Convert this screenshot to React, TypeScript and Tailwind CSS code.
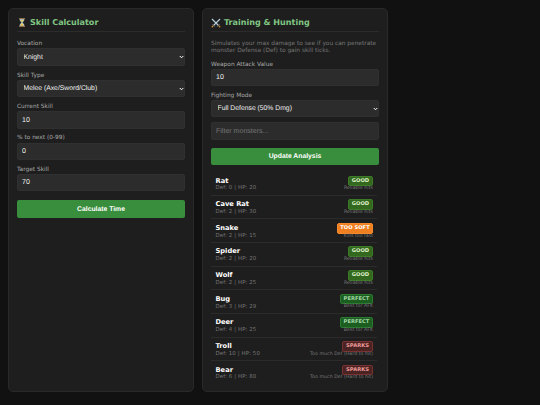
import type { ReactNode } from "react";

const SANS = "font-['DejaVu_Sans',sans-serif] [text-rendering:geometricPrecision]";
const FIELD =
  "block h-[17.3px] w-full appearance-none rounded-[2px] border border-[#303030] bg-[#2c2c2c] font-['Liberation_Sans',sans-serif] leading-[15px] text-[#f0f0f0] outline-none placeholder:text-[#757575] [text-rendering:geometricPrecision]";

type Rating = "good" | "soft" | "perfect" | "sparks";

const RATINGS: Record<Rating, { label: string; note: string; style: string }> = {
  good: { label: "GOOD", note: "Reliable hits", style: "w-[25px] border-[#3d7a28] bg-[#33691e] text-[#dcedc8]" },
  soft: { label: "TOO SOFT", note: "Kills too fast", style: "w-[36px] border-[#f58a2c] bg-[#ef7f1f] text-white" },
  perfect: { label: "PERFECT", note: "Best for AFK", style: "w-[33px] border-[#2a7a30] bg-[#1b5e20] text-[#a5d6a7]" },
  sparks: { label: "SPARKS", note: "Too much Def (Hard to hit)", style: "w-[31px] border-[#7a3030] bg-[#4a2423] text-[#ef9a9a]" },
};

const MONSTERS: { name: string; def: number; hp: number; rating: Rating }[] = [
  { name: "Rat", def: 0, hp: 20, rating: "good" },
  { name: "Cave Rat", def: 2, hp: 30, rating: "good" },
  { name: "Snake", def: 2, hp: 15, rating: "soft" },
  { name: "Spider", def: 2, hp: 20, rating: "good" },
  { name: "Wolf", def: 2, hp: 25, rating: "good" },
  { name: "Bug", def: 3, hp: 29, rating: "perfect" },
  { name: "Deer", def: 4, hp: 25, rating: "perfect" },
  { name: "Troll", def: 10, hp: 50, rating: "sparks" },
  { name: "Bear", def: 6, hp: 80, rating: "sparks" },
];

function Hourglass() {
  return (
    <svg className="h-[9px] w-[10px] shrink-0" viewBox="0 0 20 18">
      <path d="M5.5 2h9v2.5c0 2-3.2 3-3.2 4.5s3.2 2.5 3.2 4.5V16h-9v-2.5c0-2 3.2-3 3.2-4.5S5.5 6.5 5.5 4.5Z" fill="#a9c4cb" />
      <path d="M7 4.5h6L10 8.5ZM10 10l3.5 5h-7Z" fill="#f5c542" />
      <path d="M4 .5h12v2H4ZM4 15.5h12v2H4Z" fill="#b58a56" />
    </svg>
  );
}

function Swords() {
  return (
    <svg className="h-[10px] w-[10px] shrink-0" viewBox="0 0 20 20">
      <path d="M2 2l12.5 12.5M18 2L5.5 14.5" stroke="#b9d3df" strokeWidth="2.2" />
      <path d="M3 12.5l4.5 4.5M17 12.5L12.5 17" stroke="#7b8d96" strokeWidth="1.6" />
      <path d="M5 15l-3.5 3.5M15 15l3.5 3.5" stroke="#c98a35" strokeWidth="2.2" />
    </svg>
  );
}

function Panel({ icon, title, children }: { icon: ReactNode; title: string; children: ReactNode }) {
  return (
    <section className="h-[384px] w-[186px] rounded-[5px] border border-[#292929] bg-[#1e1e1e] px-2 pt-[7px]">
      <h2 className="flex h-4 items-start gap-[3px] border-b border-[#2c2c2c] text-[8.05px] leading-[13px] font-bold whitespace-nowrap text-[#81c784]">
        <span className="flex h-[13px] items-center">{icon}</span>
        {title}
      </h2>
      {children}
    </section>
  );
}

function Label({ text, children }: { text: string; children: ReactNode }) {
  return (
    <label className="block h-[31.4px]">
      <span className="block h-[9.2px] text-[5.85px] leading-[10px] whitespace-nowrap text-[#aaa]">{text}</span>
      {children}
    </label>
  );
}

function Select({ value }: { value: string }) {
  return (
    <span className="grid items-center">
      <select className={`${FIELD} col-start-1 row-start-1 pl-[5.5px] text-[6.8px]`} defaultValue={value}>
        <option>{value}</option>
      </select>
      <svg className="col-start-1 row-start-1 mr-[1px] h-[4px] w-[5px] justify-self-end" viewBox="0 0 10 8">
        <path d="M1.5 2L5 5.5 8.5 2" fill="none" stroke="#fff" strokeWidth="2" />
      </svg>
    </span>
  );
}

function TextInput({ value, placeholder }: { value?: string; placeholder?: string }) {
  return <input className={`${FIELD} pt-[0.6px] pl-[4px] text-[7.05px]`} defaultValue={value} placeholder={placeholder} />;
}

function Button({ children }: { children: ReactNode }) {
  return (
    <button className="block h-[17.6px] w-full rounded-[2px] bg-[#388e3c] font-['Liberation_Sans',sans-serif] text-[6.8px] leading-[17px] font-bold text-white [text-rendering:geometricPrecision]">
      {children}
    </button>
  );
}

export default function App() {
  return (
    <main className={`flex h-[405px] w-[540px] gap-2 overflow-hidden bg-[#111] p-2 ${SANS}`}>
      <Panel icon={<Hourglass />} title="Skill Calculator">
        <div className="pt-[7.3px]">
          <Label text="Vocation"><Select value="Knight" /></Label>
          <Label text="Skill Type"><Select value="Melee (Axe/Sword/Club)" /></Label>
          <Label text="Current Skill"><TextInput value="10" /></Label>
          <Label text="% to next (0-99)"><TextInput value="0" /></Label>
          <Label text="Target Skill"><TextInput value="70" /></Label>
        </div>
        <div className="pt-[4px]"><Button>Calculate Time</Button></div>
      </Panel>

      <Panel icon={<Swords />} title="Training & Hunting">
        <p className="h-[27.5px] pt-[8.5px] text-[5.85px] leading-[7px] whitespace-nowrap text-[#777]">
          Simulates your max damage to see if you can penetrate
          <br />
          monster Defense (Def) to gain skill ticks.
        </p>
        <Label text="Weapon Attack Value"><TextInput value="10" /></Label>
        <Label text="Fighting Mode"><Select value="Full Defense (50% Dmg)" /></Label>
        <TextInput placeholder="Filter monsters..." />
        <div className="pt-[8px]"><Button>Update Analysis</Button></div>
        <ul className="mt-[7px] w-[166px]">
          {MONSTERS.map(({ name, def, hp, rating }) => {
            const r = RATINGS[rating];
            return (
              <li key={name} className="flex h-[23.65px] justify-between border-b border-[#2b2b2b] pt-[3.4px] pr-1 pl-[4.5px] last:border-transparent">
                <div className="pt-[1px] whitespace-nowrap">
                  <div className="text-[6.7px] leading-[8.5px] font-bold text-white">{name}</div>
                  <div className="pt-[0.3px] text-[5.4px] leading-[6px] tracking-[0.12px] text-[#777]">Def: {def} | HP: {hp}</div>
                </div>
                <div className="flex flex-col items-end whitespace-nowrap">
                  <span className={`h-[10.7px] rounded-[2px] border text-center text-[5.2px] leading-[9.4px] font-bold ${r.style}`}>{r.label}</span>
                  <span className="text-[4.75px] leading-[5.5px] text-[#777]">{r.note}</span>
                </div>
              </li>
            );
          })}
        </ul>
      </Panel>
    </main>
  );
}
